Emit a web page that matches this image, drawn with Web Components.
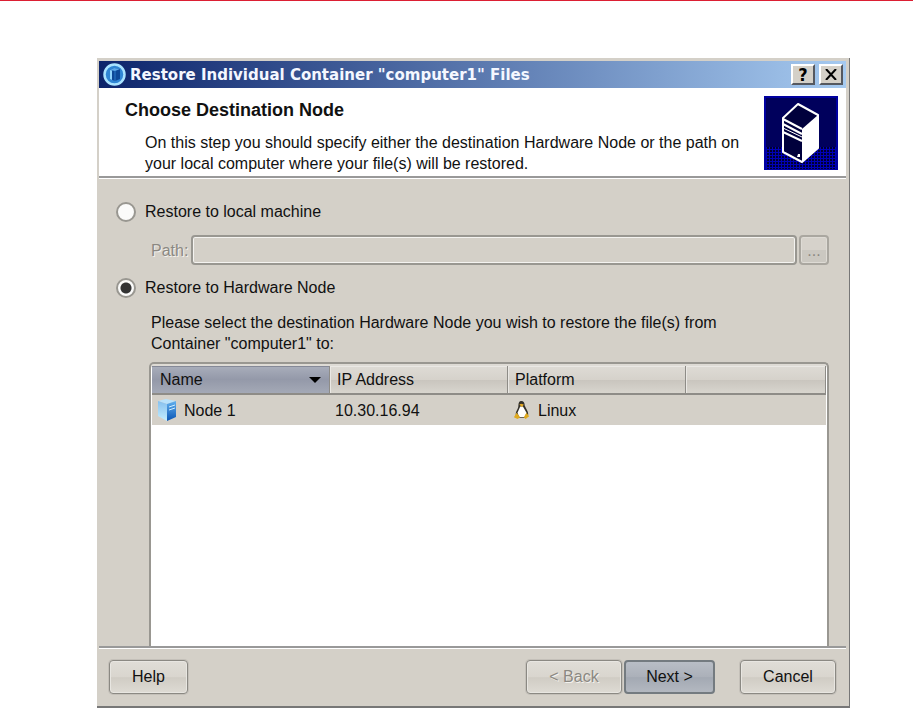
<!DOCTYPE html>
<html lang="en">
<head>
<meta charset="utf-8">
<title>Restore Individual Container Files</title>
<style>
	* {
		box-sizing: border-box;
	}
	body {
		margin: 0;
		min-height: 100vh;
		display: flex;
		flex-direction: column;
		padding: 57px 63px 0 97px;
		border-top: 1px solid #dc1f33;
		background: #fff;
		color: #111;
		font-family: "Liberation Sans", Arial, sans-serif;
		font-size: 16px;
		line-height: 21px;
	}
	wizard-dialog {
		flex: 1;
	}
</style>
</head>
<body>
<wizard-dialog caption='Restore Individual Container "computer1" Files'>
	<wizard-header slot="header" heading="Choose Destination Node">
		On this step you should specify either the destination Hardware Node or the path on your local computer where your file(s) will be restored.
	</wizard-header>
	<restore-form>
		<node-table></node-table>
	</restore-form>
	<wizard-buttons slot="footer"></wizard-buttons>
</wizard-dialog>

<script>
class WizardDialog extends HTMLElement {
	constructor() {
		super();
		this.attachShadow({ mode: 'open' });
	}

	connectedCallback() {
		this.shadowRoot.innerHTML = `
			<style>
				:host {
					display: flex;
					flex-direction: column;
					box-sizing: border-box;
					padding: 3px 3px 1px 2px;
					background: #d4d0c8;
					border-right: 1px solid #777;
					border-bottom: 2px solid #777;
				}
				.titlebar {
					display: flex;
					align-items: center;
					height: 27px;
					padding: 0 3px 0 4px;
					gap: 4px;
					background: linear-gradient(90deg, #0c246b, #a6caf0);
					color: #f4f7ff;
				}
				h1 {
					flex: 1;
					margin: 0;
					font: bold 15px "DejaVu Sans", Verdana, sans-serif;
					white-space: nowrap;
				}
				.logo {
					flex: none;
				}
				.tool {
					width: 24px;
					height: 21px;
					padding: 0;
					border: 2px solid;
					border-color: #fff #55585f #55585f #fff;
					background: #d4d0c8;
					display: flex;
					align-items: center;
					justify-content: center;
					font: bold 18px "DejaVu Sans Condensed", "DejaVu Sans", sans-serif;
					line-height: 16px;
					color: #000;
				}
				main {
					flex: 1;
					display: flex;
					flex-direction: column;
				}
				footer {
					border-top: 2px solid #999;
					box-shadow: inset 0 1px #fff;
				}
			</style>
			<div class="titlebar">
				<svg class="logo" width="23" height="23" viewBox="0 0 46 46" aria-hidden="true">
					<circle cx="23" cy="23" r="20" fill="#2f86d4" stroke="#a9e3ff" stroke-width="5"/>
					<path d="M14 14l8-4 12 2v20l-10 4-10-4z" fill="#0d4898"/>
					<path d="M14 14l8-4 12 2-10 4z" fill="#5aa9ea"/>
					<path d="M14 14l4 1v19l-4-2z" fill="#8fd2fb"/>
					<path d="M24 16v20" stroke="#2b78c8" stroke-width="2"/>
				</svg>
				<h1>${this.getAttribute('caption')}</h1>
				<button class="tool" aria-label="Help">?</button>
				<button class="tool" aria-label="Close">
					<svg width="12" height="11" viewBox="0 0 12 11"><path d="M1 0l10 11M11 0L1 11" stroke="#000" stroke-width="2"/></svg>
				</button>
			</div>
			<slot name="header"></slot>
			<main><slot></slot></main>
			<footer><slot name="footer"></slot></footer>
		`;
	}
}
customElements.define('wizard-dialog', WizardDialog);

class WizardHeader extends HTMLElement {
	constructor() {
		super();
		this.attachShadow({ mode: 'open' });
	}

	connectedCallback() {
		this.shadowRoot.innerHTML = `
			<style>
				:host {
					display: flex;
					justify-content: space-between;
					gap: 16px;
					padding: 8px 8px 0 26px;
					background: #fff;
					border-bottom: 2px solid #999;
					box-shadow: 0 1px #fff;
				}
				h2 {
					margin: 4px 0 11px;
					font-size: 18px;
					line-height: 21px;
				}
				p {
					margin: 0 0 2px 20px;
				}
				svg {
					flex: none;
					margin-bottom: 6px;
				}
			</style>
			<div>
				<h2>${this.getAttribute('heading')}</h2>
				<p><slot></slot></p>
			</div>
			<svg width="74" height="74" viewBox="0 0 74 74" aria-hidden="true">
				<defs>
					<pattern id="dots" width="3" height="3" patternUnits="userSpaceOnUse">
						<rect width="3" height="3" fill="#0000b8"/>
						<rect width="2" height="2" fill="#000030"/>
					</pattern>
				</defs>
				<rect width="74" height="74" fill="#0000a0"/>
				<rect x="2" y="2" width="70" height="49" fill="#00005c"/>
				<rect x="2" y="51" width="70" height="22" fill="url(#dots)"/>
				<path d="M34 8L54 19V52L38 66L19 56V22Z" fill="#00003c" stroke="#fff" stroke-width="2" stroke-linejoin="round"/>
				<path d="M54 19V52L38 66V33Z" fill="#fff"/>
				<path d="M19 23L38 33M19 28L38 38M19 36L38 45" fill="none" stroke="#fff" stroke-width="2"/>
				<path d="M19 32L38 41" fill="none" stroke="#fff" stroke-width="1"/>
				<path d="M34 58h2v3h-3z" fill="#fff"/>
			</svg>
		`;
	}
}
customElements.define('wizard-header', WizardHeader);

class RestoreForm extends HTMLElement {
	constructor() {
		super();
		this.attachShadow({ mode: 'open' });
		this.shadowRoot.innerHTML = `
			<style>
				:host {
					flex: 1;
					display: flex;
					flex-direction: column;
					padding: 23px 17px 0;
				}
				.choice {
					display: flex;
					align-items: center;
					gap: 9px;
				}
				input[type=radio] {
					appearance: none;
					width: 20px;
					height: 20px;
					margin: 0;
					border: 2px solid #999791;
					border-radius: 50%;
					background: #fbfbfa;
				}
				input[type=radio]:checked {
					background: radial-gradient(circle, #333 5px, #fbfbfa 6px);
				}
				.path {
					display: flex;
					align-items: center;
					gap: 3px;
					margin: 13px 0 12px 35px;
					color: #8b8882;
					text-shadow: 1px 1px #f4f2ee;
				}
				.path input {
					flex: 1;
					min-width: 0;
					height: 30px;
					box-sizing: border-box;
					border: 2px solid #999791;
					border-radius: 4px;
					background: #d4d0c8;
					box-shadow: inset 0 0 0 1px #f4f3f0;
				}
				.path button {
					width: 30px;
					height: 30px;
					margin-left: -1px;
					padding: 0;
					border: 2px solid #aaa7a0;
					border-radius: 4px;
					background: linear-gradient(#d6d2cb 50%, #cbc8c1 50%);
					box-shadow: inset 0 0 0 1px #dedbd5;
					font: inherit;
					color: #8b8882;
				}
				p {
					margin: 14px 100px 8px 35px;
				}
				.list {
					flex: 1;
					display: flex;
					flex-direction: column;
					margin: 0 0 0 33px;
				}
			</style>
			<label class="choice"><input type="radio" name="target">Restore to local machine</label>
			<div class="path">
				<label for="path">Path:</label>
				<input id="path" type="text" disabled>
				<button disabled aria-label="Browse">...</button>
			</div>
			<label class="choice"><input type="radio" name="target" checked>Restore to Hardware Node</label>
			<p>Please select the destination Hardware Node you wish to restore the file(s) from Container "computer1" to:</p>
			<div class="list"><slot></slot></div>
		`;
	}
}
customElements.define('restore-form', RestoreForm);

class NodeTable extends HTMLElement {
	constructor() {
		super();
		this.attachShadow({ mode: 'open' });
		this.shadowRoot.innerHTML = `
			<style>
				:host {
					flex: 1;
					display: block;
					border: 2px solid #999791;
					border-bottom: 0;
					border-radius: 5px 5px 0 0;
					background: #fff;
					box-shadow: inset 0 2px #dedbd5;
					padding: 2px 1px 0;
				}
				table {
					width: 100%;
					border-collapse: separate;
					border-spacing: 0;
					table-layout: fixed;
				}
				th {
					box-sizing: border-box;
					height: 29px;
					padding: 0 7px;
					border-bottom: 2px solid #8e8c87;
					border-right: 1px solid #8e8c87;
					background: linear-gradient(#dedbd5, #d6d2cb 50%, #c9c5be 52%, #d8d5ce);
					box-shadow: inset 1px 1px #eae8e4;
					font-weight: normal;
					text-align: left;
				}
				th.sorted {
					width: 178px;
					padding: 0 8px;
					background: linear-gradient(#a9aebb, #9499a9 50%, #a4a9b6);
					box-shadow: inset 0 1px #858997;
				}
				.mid {
					width: 178px;
				}
				td {
					height: 30px;
					box-sizing: border-box;
					padding: 0 5px;
					background: #d4d0c8;
				}
				th div, td div {
					display: flex;
					align-items: center;
					justify-content: space-between;
				}
				td div {
					justify-content: flex-start;
					gap: 7px;
				}
			</style>
			<table>
				<thead>
					<tr>
						<th class="sorted" aria-sort="descending"><div>Name
							<svg width="12" height="7" viewBox="0 0 12 7"><path d="M0 1h12L6 7z" fill="#000"/></svg>
						</div></th>
						<th class="mid">IP Address</th>
						<th class="mid">Platform</th>
						<th></th>
					</tr>
				</thead>
				<tbody>
					<tr>
						<td><div>
							<svg width="20" height="24" viewBox="0 0 20 24" aria-hidden="true">
								<defs>
									<linearGradient id="side" x1="0" y1="0" x2="0" y2="1">
										<stop offset="0" stop-color="#86c0ee"/>
										<stop offset="1" stop-color="#c4eeff"/>
									</linearGradient>
									<linearGradient id="front" x1="0" y1="0" x2="0" y2="1">
										<stop offset="0" stop-color="#62b0ee"/>
										<stop offset="1" stop-color="#0a55b4"/>
									</linearGradient>
								</defs>
								<path d="M1 3l8-2 10 2-9 3z" fill="#b9e2fb"/>
								<path d="M1 3l9 3v17l-9-5z" fill="url(#side)"/>
								<path d="M10 6l9-3v16l-9 4z" fill="url(#front)"/>
								<path d="M12 9l6-2M12 12l6-2" stroke="#d0efff" stroke-width="1"/>
							</svg>
							Node 1</div></td>
						<td>10.30.16.94</td>
						<td><div>
							<svg width="18" height="20" viewBox="0 0 20 20" aria-hidden="true">
								<path d="M9 0c3 0 4 2 4 5 1 3 4 6 4 10l-4 4H6l-3-4c0-4 3-6 3-10 0-3 1-5 3-5z" fill="#33302a"/>
								<path d="M8 6h3l4 7-2 5H7l-2-5z" fill="#fff"/>
								<path d="M7 4l2-1 3 1-2 3z" fill="#e4aa25"/>
								<path d="M4 13l4 5-3 2-4-2zM15 13l3 4-4 3-2-2z" fill="#dfa91f"/>
							</svg>
							Linux</div></td>
						<td></td>
					</tr>
				</tbody>
			</table>
		`;
	}
}
customElements.define('node-table', NodeTable);

class WizardButtons extends HTMLElement {
	constructor() {
		super();
		this.attachShadow({ mode: 'open' });
		this.shadowRoot.innerHTML = `
			<style>
				:host {
					display: flex;
					gap: 2px;
					padding: 12px 10px 11px;
				}
				button {
					min-width: 96px;
					height: 34px;
					padding: 0 8px 2px;
					border: 1px solid #8b8983;
					border-radius: 4px;
					background: linear-gradient(#e0ddd7, #d9d5ce 50%, #d0ccc4 52%, #dedbd4);
					box-shadow: inset 0 0 0 1px #e8e6e1, 0 0 0 1px #c4c0b9;
					font: inherit;
					color: #111;
				}
				.help {
					min-width: 79px;
					margin-right: auto;
				}
				.next {
					min-width: 91px;
					border: 2px solid #747b80;
					background: linear-gradient(#b9bec6, #abb0b9 50%, #a3a9b3 52%, #b3b8c0);
					box-shadow: none;
				}
				.cancel {
					margin-left: 23px;
				}
				button:disabled {
					color: #8b8882;
					text-shadow: 1px 1px #f4f2ee;
				}
			</style>
			<button class="help">Help</button>
			<button disabled>&lt; Back</button>
			<button class="next">Next &gt;</button>
			<button class="cancel">Cancel</button>
		`;
	}
}
customElements.define('wizard-buttons', WizardButtons);
</script>
</body>
</html>
